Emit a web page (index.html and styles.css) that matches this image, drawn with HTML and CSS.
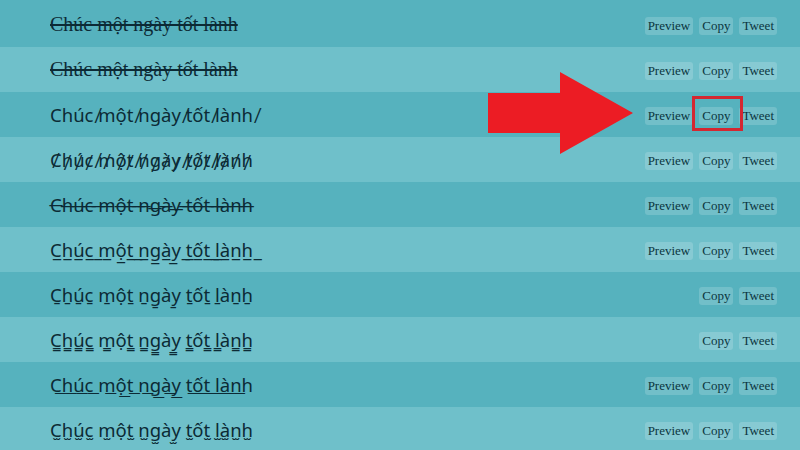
FILE: index.html
```html
<!DOCTYPE html>
<html lang="vi">
<head>
<meta charset="utf-8">
<link rel="stylesheet" href="styles.css">
</head>
<body>
<div class="list">
  <div class="row dark">
    <span class="txt serif strike">Chúc một ngày tốt lành</span>
    <div class="btns"><span class="btn">Preview</span><span class="btn">Copy</span><span class="btn">Tweet</span></div>
  </div>
  <div class="row light">
    <span class="txt serif strike high">Chúc một ngày tốt lành</span>
    <div class="btns"><span class="btn">Preview</span><span class="btn">Copy</span><span class="btn">Tweet</span></div>
  </div>
  <div class="row dark">
    <span class="txt">Chúc &#x0338;một &#x0338;ngày &#x0338;tốt &#x0338;lành &#x0338;</span>
    <div class="btns"><span class="btn">Preview</span><span class="btn">Copy</span><span class="btn">Tweet</span></div>
  </div>
  <div class="row light">
    <span class="txt">C&#x0338;h&#x0338;ú&#x0338;c&#x0338; &#x0338;m&#x0338;ộ&#x0338;t&#x0338; &#x0338;n&#x0338;g&#x0338;à&#x0338;y&#x0338; &#x0338;t&#x0338;ố&#x0338;t&#x0338; &#x0338;l&#x0338;à&#x0338;n&#x0338;h&#x0338;</span>
    <div class="btns"><span class="btn">Preview</span><span class="btn">Copy</span><span class="btn">Tweet</span></div>
  </div>
  <div class="row dark">
    <span class="txt">C&#x0336;h&#x0336;ú&#x0336;c&#x0336; &#x0336;m&#x0336;ộ&#x0336;t&#x0336; &#x0336;n&#x0336;g&#x0336;à&#x0336;y&#x0336; &#x0336;t&#x0336;ố&#x0336;t&#x0336; &#x0336;l&#x0336;à&#x0336;n&#x0336;h&#x0336;</span>
    <div class="btns"><span class="btn">Preview</span><span class="btn">Copy</span><span class="btn">Tweet</span></div>
  </div>
  <div class="row light">
    <span class="txt">C&#x0332;h&#x0332;ú&#x0332;c&#x0332; &#x0332;m&#x0332;ộ&#x0332;t&#x0332; &#x0332;n&#x0332;g&#x0332;à&#x0332;y&#x0332; &#x0332;t&#x0332;ố&#x0332;t&#x0332; &#x0332;l&#x0332;à&#x0332;n&#x0332;h&#x0332; &#x0332;</span>
    <div class="btns"><span class="btn">Preview</span><span class="btn">Copy</span><span class="btn">Tweet</span></div>
  </div>
  <div class="row dark">
    <span class="txt">C&#x0331;h&#x0331;ú&#x0331;c&#x0331; m&#x0331;ột&#x0331; n&#x0331;g&#x0331;ày&#x0331; t&#x0331;ốt&#x0331; l&#x0331;àn&#x0331;h&#x0331;</span>
    <div class="btns"><span class="btn">Copy</span><span class="btn">Tweet</span></div>
  </div>
  <div class="row light">
    <span class="txt">C&#x0333;h&#x0333;ú&#x0333;c&#x0333; m&#x0333;ột&#x0333; n&#x0333;g&#x0333;ày&#x0333; t&#x0333;ốt&#x0333; l&#x0333;àn&#x0333;h&#x0333;</span>
    <div class="btns"><span class="btn">Copy</span><span class="btn">Tweet</span></div>
  </div>
  <div class="row dark">
    <span class="txt">C&#x035F;h&#x035F;ú&#x035F;c&#x035F; m&#x035F;ộ&#x035F;t&#x035F; n&#x035F;g&#x035F;à&#x035F;y&#x035F; t&#x035F;ố&#x035F;t&#x035F; l&#x035F;à&#x035F;n&#x035F;h</span>
    <div class="btns"><span class="btn">Preview</span><span class="btn">Copy</span><span class="btn">Tweet</span></div>
  </div>
  <div class="row light">
    <span class="txt">C&#x032B;h&#x032B;ú&#x032B;c&#x032B; m&#x032B;ột&#x032B; n&#x032B;g&#x032B;ày&#x032B; t&#x032B;ốt&#x032B; l&#x032B;à&#x032B;n&#x032B;h&#x032B;</span>
    <div class="btns"><span class="btn">Preview</span><span class="btn">Copy</span><span class="btn">Tweet</span></div>
  </div>
</div>
<svg class="arrow" width="146" height="82" viewBox="0 0 146 82" aria-hidden="true">
  <polygon points="0,21 72,21 72,0 145,41 72,82 72,61 0,61" fill="#ec1c24"/>
</svg>
<div class="mark"></div>
</body>
</html>
```
FILE: styles.css
```css
html, body {
  margin: 0;
  padding: 0;
}
body {
  width: 800px;
  height: 450px;
  overflow: hidden;
  position: relative;
  background: #56b2be;
}
.list {
  display: flex;
  flex-direction: column;
  padding-top: 2px;
}
.row {
  height: 45px;
  flex: none;
  display: flex;
  align-items: center;
  justify-content: space-between;
  padding: 0 23px 0 50px;
  box-sizing: border-box;
}
.row.dark { background: #56b2be; }
.row.light { background: #6fc0ca; }
.txt {
  font-family: "Noto Sans", "DejaVu Sans", sans-serif;
  font-size: 18.5px;
  color: #0c2a35;
  white-space: pre;
}
.txt.serif {
  font-family: "Liberation Serif", serif;
  font-size: 20px;
}
.txt.strike {
  text-decoration: line-through;
  text-decoration-thickness: 1.5px;
}
.btns {
  display: flex;
  gap: 6px;
  padding-top: 2px;
}
.btn {
  font-family: "Liberation Serif", serif;
  font-size: 13px;
  line-height: 18px;
  height: 18px;
  padding: 0 3px;
  border-radius: 3px;
  background: rgba(255, 255, 255, 0.17);
  color: #0b3540;
}
.arrow {
  position: absolute;
  left: 488px;
  top: 72px;
}
.mark {
  position: absolute;
  left: 692px;
  top: 96px;
  width: 45px;
  height: 29px;
  border: 3px solid #d42731;
}
```
